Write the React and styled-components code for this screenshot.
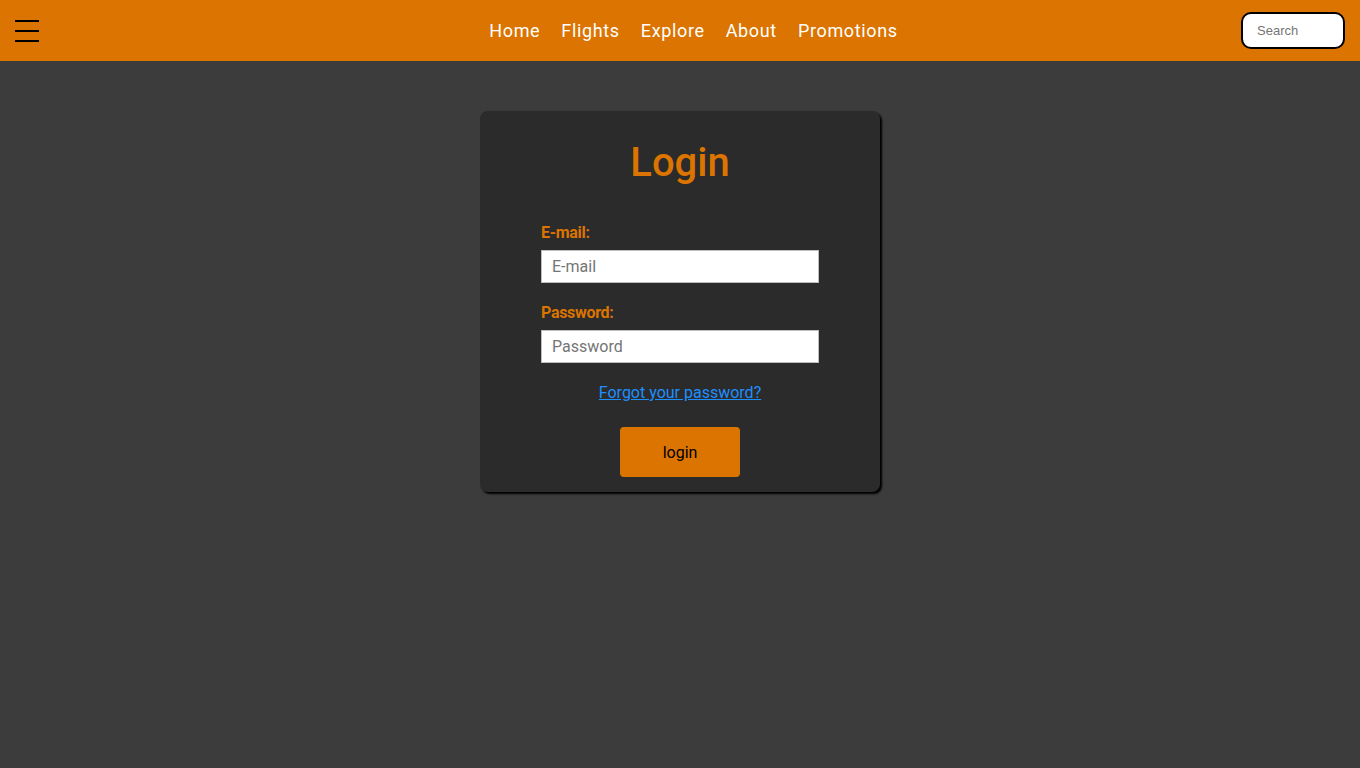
import React from 'react';
import styled, { createGlobalStyle } from 'styled-components';

const GlobalStyle = createGlobalStyle`
  html, body {
    margin: 0;
    padding: 0;
    background: #3c3c3c;
    font-family: Roboto, "Liberation Sans", sans-serif;
  }
  * { box-sizing: border-box; }
`;

const Page = styled.div`
  min-height: 768px;
  background: #3c3c3c;
`;

const NavBar = styled.nav`
  height: 61px;
  background: #db7400;
  display: grid;
  grid-template-columns: 1fr auto 1fr;
  align-items: center;
  padding: 0 15px;
`;

const Burger = styled.button`
  width: 24px;
  height: 22px;
  padding: 0;
  border: none;
  background: transparent;
  display: flex;
  flex-direction: column;
  justify-content: space-between;
  cursor: pointer;

  span {
    display: block;
    height: 2px;
    background: #000;
  }
`;

const NavLinks = styled.ul`
  list-style: none;
  display: flex;
  gap: 21px;
  margin: 0;
  padding: 0 0 0 27px;
`;

const NavLink = styled.a`
  color: #fff;
  font-size: 18px;
  letter-spacing: 0.65px;
  text-decoration: none;
`;

const SearchBox = styled.input`
  justify-self: end;
  width: 104px;
  height: 37px;
  border: 2px solid #000;
  border-radius: 10px;
  padding: 0 14px;
  font-family: "Liberation Sans", Arial, sans-serif;
  font-size: 13px;
  outline: none;

  &::placeholder {
    color: #757575;
  }
`;

const Main = styled.main`
  display: flex;
  justify-content: center;
  padding-top: 50px;
`;

const Card = styled.form`
  width: 400px;
  background: #2b2b2b;
  border-radius: 8px;
  box-shadow: 2px 2px 2px #000;
  padding: 26px 61px 15px;
  display: flex;
  flex-direction: column;
`;

const Title = styled.h1`
  margin: 0 0 34px;
  text-align: center;
  color: #db7400;
  font-size: 40px;
  font-weight: 500;
  line-height: 52px;
`;

const Field = styled.div`
  display: flex;
  flex-direction: column;
  margin-bottom: ${(p) => p.gap || 0}px;
`;

const Label = styled.label`
  color: #db7400;
  font-size: 16px;
  font-weight: 700;
  letter-spacing: -0.3px;
  line-height: 20px;
  margin-bottom: 7px;
`;

const TextInput = styled.input`
  width: 278px;
  height: 33px;
  border: 1px solid #bdbdbd;
  padding: 0 10px;
  font-family: Roboto, "Liberation Sans", sans-serif;
  font-size: 16px;
  outline: none;

  &::placeholder {
    color: #757575;
  }
`;

const Forgot = styled.a`
  align-self: center;
  margin-top: 20px;
  color: #1e8fff;
  font-size: 16px;
  line-height: 20px;
  text-decoration: underline;
`;

const LoginBtn = styled.button`
  align-self: center;
  margin-top: 24px;
  width: 120px;
  height: 50px;
  border: none;
  border-radius: 4px;
  background: #db7400;
  color: #000;
  font-family: Roboto, "Liberation Sans", sans-serif;
  font-size: 16px;
  cursor: pointer;
`;

const links = ['Home', 'Flights', 'Explore', 'About', 'Promotions'];

export default function App() {
  return (
    <Page>
      <GlobalStyle />
      <NavBar>
        <Burger aria-label="menu">
          <span />
          <span />
          <span />
        </Burger>
        <NavLinks>
          {links.map((l) => (
            <li key={l}>
              <NavLink href="#">{l}</NavLink>
            </li>
          ))}
        </NavLinks>
        <SearchBox placeholder="Search" />
      </NavBar>
      <Main>
        <Card onSubmit={(e) => e.preventDefault()}>
          <Title>Login</Title>
          <Field gap={20}>
            <Label htmlFor="email">E-mail:</Label>
            <TextInput id="email" type="email" placeholder="E-mail" />
          </Field>
          <Field>
            <Label htmlFor="password">Password:</Label>
            <TextInput id="password" type="password" placeholder="Password" />
          </Field>
          <Forgot href="#">Forgot your password?</Forgot>
          <LoginBtn type="submit">login</LoginBtn>
        </Card>
      </Main>
    </Page>
  );
}
